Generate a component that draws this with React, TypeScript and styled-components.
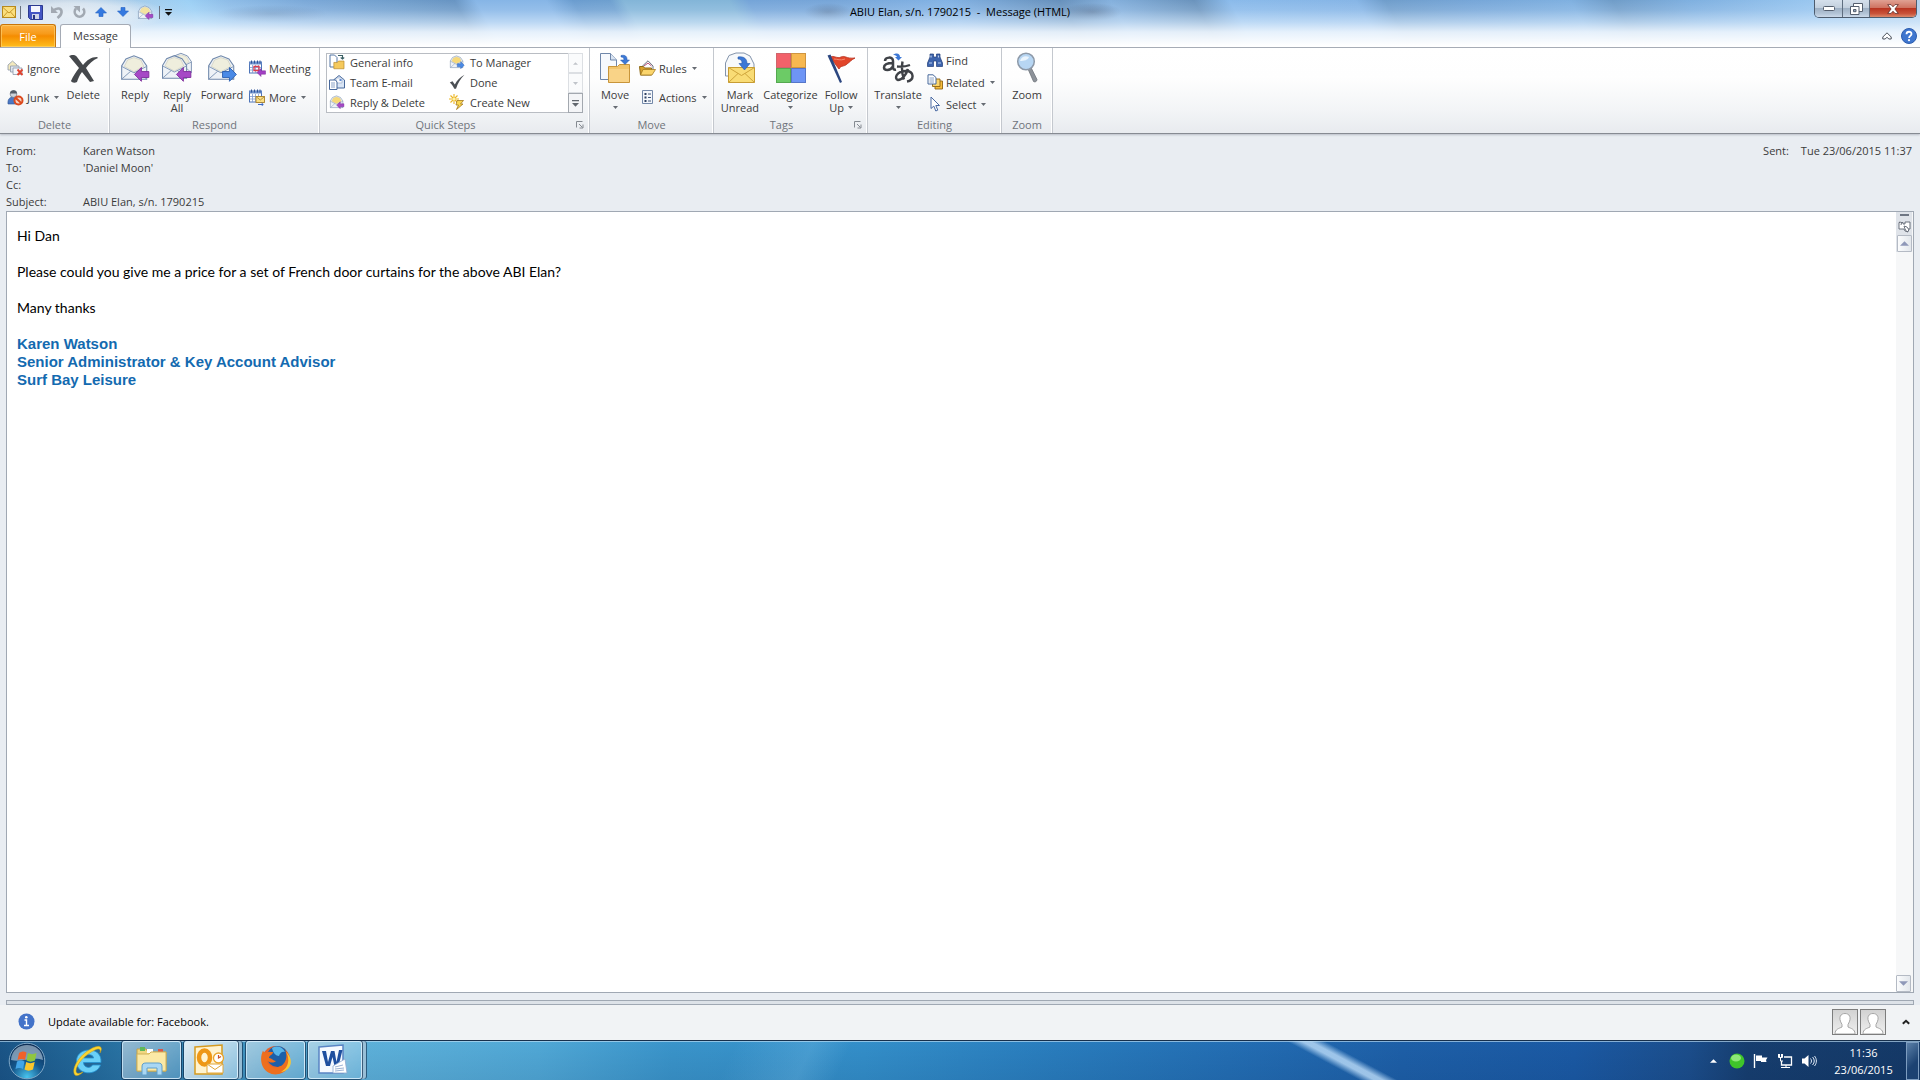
import React from "react";
import styled, { createGlobalStyle, css } from "styled-components";

const uiFont = `"Open Sans", "Noto Sans", "Segoe UI", sans-serif`;

const GlobalStyle = createGlobalStyle`
  *, *::before, *::after { box-sizing: border-box; }
  body { margin: 0; font-family: ${uiFont}; font-size: 11px; color: #3b3b3b; background: #e9edf2; }
  button { font: inherit; color: inherit; background: none; border: 0; padding: 0; margin: 0; }
  svg { display: block; flex: none; }
  p, h1, h2, dl, dd, dt { margin: 0; font-size: inherit; font-weight: inherit; }
`;

const Screen = styled.div`
  display: flex;
  flex-direction: column;
  min-height: 100vh;
`;

/* ---------- window frame ---------- */

const Glass = styled.header`
  background:
    radial-gradient(ellipse 95px 18px at 75px 14px, rgba(238,243,248,0.85), rgba(238,243,248,0.6) 60%, rgba(238,243,248,0) 100%),
    linear-gradient(180deg, rgba(215,234,253,0) 0, rgba(215,234,253,0.18) 10px, rgba(222,238,253,0.6) 22px, rgba(240,247,254,0.9) 32px, #fff 46px),
    radial-gradient(ellipse 24px 9px at 828px 12px, rgba(60,80,110,0.4), rgba(60,80,110,0) 100%),
    radial-gradient(ellipse 30px 9px at 1092px 12px, rgba(60,80,110,0.45), rgba(60,80,110,0) 100%),
    radial-gradient(ellipse 56px 9px at 272px 14px, rgba(60,90,130,0.3), rgba(60,90,130,0) 100%),
    linear-gradient(60deg, #b5c5d4 0, #b4cbe0 5%, #a5cbea 8%, #9cd0f5 11%, #8ebde8 13%, #7aa8d8 17%, #6f9dcb 22%, #6794c2 24.700%, #86b5e6 25.800%, #86b5e6 29.400%, #6a9ccf 30.800%, #6d9fcf 32.700%, #83b5d8 33.400%, #83b5d8 38.800%, #74a4d8 39.800%, #76a5d8 44%, #82b2e4 50%, #6690bb 55.800%, #84b0dd 58.400%, #6a93bc 62.700%, #8abaea 64.500%, #86b5e6 71%, #6f9dcb 72.500%, #76a6d8 77%, #7fb0e0 82%, #6f9cc8 84.200%, #7eafdf 88%, #97c5ef 94%, #b4d3ee 100%);
  border-bottom: 1px solid #a5abb5;
`;

const TitleBar = styled.div`
  display: grid;
  grid-template-columns: 1fr auto 1fr;
  height: 24px;
`;

const QuickAccess = styled.div`
  display: flex;
  align-items: center;
  padding-left: 1px;
`;

const QuickButton = styled.button<{ $w?: number }>`
  width: ${(p) => p.$w ?? 22}px;
  height: 22px;
  display: flex;
  align-items: center;
  justify-content: center;
`;

const QuickDivider = styled.span`
  width: 1px;
  height: 13px;
  margin: 0 3px;
  background: #66717f;
`;

const WindowTitle = styled.h1`
  line-height: 23px;
  color: #000;
  white-space: pre;
`;

const WindowControls = styled.div`
  justify-self: end;
  display: flex;
  height: 18px;
  margin-right: 3px;
  border: 1px solid #4d5c6e;
  border-top: 0;
  border-radius: 0 0 5px 5px;
  overflow: hidden;
`;

const ControlButton = styled.button<{ $close?: boolean }>`
  width: ${(p) => (p.$close ? 47 : 27)}px;
  display: flex;
  align-items: center;
  justify-content: center;
  border-left: 1px solid #5f6e80;
  background: ${(p) =>
    p.$close
      ? "linear-gradient(#e0a193 0, #cf7361 45%, #b93521 50%, #c9533a 80%, #dc8a6c 100%)"
      : "linear-gradient(#d5e0ec 0, #c3d0de 45%, #9fb1c5 50%, #b3c4d6 80%, #ccdaea 100%)"};
  &:first-child { border-left: 0; }
`;

const TabRow = styled.nav`
  display: flex;
  align-items: flex-end;
  height: 23px;
`;

const FileTab = styled.button`
  width: 56px;
  height: 23px;
  color: #fff;
  border: 1px solid #c8750a;
  border-bottom: 0;
  border-radius: 3px 3px 0 0;
  background: linear-gradient(#fcb040 0, #f79a1a 40%, #f58c00 50%, #ffbe1e 100%);
  box-shadow: inset 0 0 0 1px rgba(255,214,120,0.6);
`;

const MessageTab = styled.button`
  width: 71px;
  height: 24px;
  margin: 0 auto -1px 4px;
  padding-bottom: 2px;
  border: 1px solid #a5abb5;
  border-bottom: 0;
  border-radius: 3px 3px 0 0;
  background: #fff;
`;

const TabTool = styled.button`
  width: 22px;
  height: 23px;
  display: flex;
  align-items: center;
  justify-content: center;
`;

/* ---------- ribbon ---------- */

const Ribbon = styled.div`
  display: flex;
  height: 86px;
  background: linear-gradient(#fff 0, #fefefe 35%, #f2f4f6 75%, #e8ebef 100%);
  border-bottom: 1px solid #868b92;
  box-shadow: 0 1px 2px #b9bec6;
`;

const Group = styled.section<{ $w: number }>`
  display: flex;
  flex-direction: column;
  width: ${(p) => p.$w}px;
  border-right: 1px solid #c4c8ce;
  box-shadow: inset -1px 0 0 #fff;
`;

const GroupBody = styled.div`
  display: flex;
  flex: 1;
  padding: 0 4px;
`;

const GroupLabel = styled.div`
  display: flex;
  align-items: center;
  justify-content: center;
  gap: 10px;
  height: 17px;
  padding: 0 5px;
  color: #6f747b;
  h2 { flex: 1; text-align: center; line-height: 17px; }
`;

const BigButton = styled.button<{ $w: number }>`
  width: ${(p) => p.$w}px;
  display: flex;
  flex-direction: column;
  align-items: center;
  padding-top: 4px;
  line-height: 13px;
  white-space: nowrap;
  svg + span { margin-top: 4px; }
`;

const LabelLine = styled.span`
  display: flex;
  align-items: center;
  justify-content: center;
  gap: 4px;
  min-height: 13px;
`;

const Stack = styled.div<{ $rows: 2 | 3; $w: number }>`
  width: ${(p) => p.$w}px;
  display: flex;
  flex-direction: column;
  ${(p) =>
    p.$rows === 2
      ? css`padding-top: 10px; gap: 9px;`
      : css`padding-top: 2px; gap: 2px;`}
`;

const SmallButton = styled.button`
  display: flex;
  align-items: center;
  gap: 3px;
  height: 20px;
  padding-left: 3px;
  white-space: nowrap;
  svg:last-child:not(:first-child) { margin-left: 2px; }
`;

const Gallery = styled.div`
  display: flex;
  width: 257px;
  height: 60px;
  margin: 5px 0 0 2px;
  border: 1px solid #b9bdc3;
  background: #fff;
`;

const GalleryGrid = styled.div`
  flex: 1;
  display: grid;
  grid-template-columns: 120px 1fr;
  grid-template-rows: repeat(3, 20px);
  margin-top: -2px;
`;

const GalleryItem = styled(SmallButton)`
  gap: 5px;
  padding-left: 2px;
`;

const GalleryScroll = styled.div`
  display: flex;
  flex-direction: column;
  width: 15px;
  margin: -1px;
`;

const GalleryScrollButton = styled.button<{ $on?: boolean }>`
  flex: 1;
  display: flex;
  align-items: center;
  justify-content: center;
  border: 1px solid ${(p) => (p.$on ? "#a3a8af" : "#dcdfe3")};
  background: ${(p) => (p.$on ? "#f4f5f7" : "#fafbfc")};
`;

/* ---------- message ---------- */

const MessageHeader = styled.div`
  display: flex;
  justify-content: space-between;
  padding: 8px 8px 1px 6px;
  line-height: 17px;
`;

const Fields = styled.dl`
  display: grid;
  grid-template-columns: 77px auto;
  grid-auto-rows: 17px;
`;

const Sent = styled.dl`
  display: flex;
  gap: 12px;
`;

const Reader = styled.main`
  flex: 1;
  display: flex;
  margin: 0 6px;
  border: 1px solid #a0a8b3;
  background: #fff;
`;

const MessageText = styled.article`
  flex: 1;
  padding: 15px 10px;
  font: 14px/18px Lato, Carlito, Calibri, sans-serif;
  color: #000;
  p { min-height: 18px; }
`;

const Signature = styled.div`
  font: bold 15px/18px "Liberation Sans", Arial, sans-serif;
  color: #136ab0;
`;

const Scroller = styled.div`
  width: 17px;
  padding-right: 1px;
  display: flex;
  flex-direction: column;
  justify-content: space-between;
  background: #f6f7f8;
`;

const ScrollHead = styled.div`
  display: flex;
  flex-direction: column;
  align-items: center;
  background: #dfe3e9;
`;

const SplitHandle = styled.span`
  width: 9px;
  height: 2px;
  margin: 2px 0 4px;
  background: #6e7683;
`;

const ScrollButton = styled.button`
  width: 15px;
  height: 17px;
  display: flex;
  align-items: center;
  justify-content: center;
  border: 1px solid #b4bac4;
  border-radius: 1px;
  background: linear-gradient(90deg, #fbfcfd, #e3e7ec);
  svg + & { margin-top: 2px; }
`;

const Splitter = styled.div`
  height: 5px;
  margin: 7px 6px 0;
  border: 1px solid #a0a8b3;
  background: #dde2e8;
`;

const PeoplePane = styled.footer`
  display: flex;
  align-items: center;
  height: 35px;
  padding: 0 10px 2px 18px;
  background: #f1f3f5;
  color: #000;
`;

const PeopleText = styled.span`
  flex: 1;
  margin-left: 13px;
`;

const Avatar = styled.span`
  width: 26px;
  height: 26px;
  margin-right: 2px;
  border: 1px solid #7d7d7d;
  background: linear-gradient(#d2d2d2, #efefef);
`;

const PaneToggle = styled.button`
  margin-left: 14px;
`;

/* ---------- taskbar ---------- */

const Taskbar = styled.div`
  display: flex;
  align-items: stretch;
  height: 40px;
  border-top: 1px solid #17304c;
  box-shadow: inset 0 1px 0 rgba(190,222,245,0.65);
  color: #fff;
  background:
    linear-gradient(28deg, rgba(190,224,252,0) calc(50% - 9px), rgba(200,230,255,0.75) calc(50% - 2px), rgba(200,230,255,0.75) calc(50% + 2px), rgba(190,224,252,0) calc(50% + 9px)) 71.200% 0 / 120px 100% no-repeat,
    linear-gradient(115deg, transparent 38%, rgba(140,205,240,0.22) 42%, transparent 44%),
    linear-gradient(180deg, rgba(0,20,60,0.02), rgba(0,20,60,0.1)),
    linear-gradient(90deg, #1b5688 0, #256e9f 5%, #3f93c0 12%, #5fb4dd 19%, #52abd9 28%, #3b97cd 35%, #3491cc 45%, #2a7fc0 55%, #2470b6 64%, #1e61aa 73%, #1b5ba6 82%, #1c4f8d 88%, #173f70 91%, #153a68 100%);
`;

const StartButton = styled.button`
  width: 54px;
  display: flex;
  align-items: center;
  justify-content: center;
`;

const PinnedButton = styled.button`
  width: 68px;
  display: flex;
  align-items: center;
  justify-content: center;
`;

const TaskButton = styled.button<{ $active?: boolean; $stacked?: boolean }>`
  width: ${(p) => (p.$stacked ? 54 : 59)}px;
  height: 38px;
  margin-right: ${(p) => (p.$stacked ? 8 : 3)}px;
  padding-right: ${(p) => (p.$stacked ? 4 : 0)}px;
  display: flex;
  align-items: center;
  justify-content: center;
  border: 1px solid rgba(220,240,252,0.8);
  border-radius: 3px;
  background: ${(p) =>
    p.$active
      ? "linear-gradient(135deg, rgba(255,255,255,0.85), rgba(190,225,245,0.6))"
      : "linear-gradient(135deg, rgba(255,255,255,0.5), rgba(160,210,240,0.28))"};
  box-shadow: 0 0 0 1px rgba(12,40,70,0.65)${(p) =>
    p.$stacked ? ", 4px 0 0 0 rgba(190,224,244,0.75), 5px 0 0 0 rgba(12,40,70,0.6)" : ""};
`;

const Tray = styled.div`
  display: flex;
  align-items: center;
  margin-left: auto;
`;

const TrayButton = styled.button`
  width: 24px;
  height: 24px;
  display: flex;
  align-items: center;
  justify-content: center;
`;

const Clock = styled.div`
  width: 85px;
  text-align: center;
  line-height: 17px;
  padding-top: 1px;
`;

const ShowDesktop = styled.button`
  align-self: stretch;
  width: 13px;
  margin: 1px 1px 0 0;
  border: 1px solid #7d9dc0;
  background: linear-gradient(135deg, #5b80a8, #1c4272 60%);
`;

/* ---------- drawings ---------- */

const Caret = ({ c = "#666b72" }: { c?: string }) => (
  <svg width="5" height="3" viewBox="0 0 5 3"><path d="M0 0h5L2.500 3z" fill={c} /></svg>
);
const UpTri = ({ c = "#666b72", w = 5 }: { c?: string; w?: number }) => (
  <svg width={w} height={(w + 1) / 2} viewBox="0 0 6 3"><path d="M0 3h6L3 0z" fill={c} /></svg>
);
const DownTri = ({ c, w }: { c: string; w: number }) => (
  <svg width={w} height={(w + 1) / 2} viewBox="0 0 6 3"><path d="M0 0h6L3 3z" fill={c} /></svg>
);

const LeftArrow = <path d="M14.500 21 21 14.500v3.800h7v5.600h-7v3.600z" fill="#a649c6" stroke="#7b2a99" strokeWidth=".8" />;
const RightArrow = <path d="M28.500 21 22 14.500v3.800h-6.500v5.600H22v3.600z" fill="#4a8ae6" stroke="#2559ad" strokeWidth=".8" />;

const envelopeShape = (tint: string) => (
  <>
    <path d="M1.500 11 5.500 4.500 13 1.500 20.500 4.500l4.500 6.500v12.500H1.500z" fill="#eef2f7" stroke="#7088aa" />
    <path d="M4 11.500 7 5.500 13 3.300 19.500 5.500l2.800 6L13 16.500z" fill={tint} stroke="#c9c9b8" strokeWidth=".6" />
    <path d="M1.500 11.500 13 17.500l12-6M1.500 23.500 10 16M25 23.500 16 16" fill="none" stroke="#7f96b6" strokeWidth=".9" />
  </>
);

const MailIcon = ({ size = 32, dir, all, tint = "#efeedd" }: { size?: number; dir?: "l" | "r"; all?: boolean; tint?: string }) => (
  <svg width={size} height={size} viewBox="0 0 30 30">
    {all && <g transform="translate(8 0) scale(.82)">{envelopeShape(tint)}</g>}
    <g transform={all ? "translate(0 2) scale(.96)" : "translate(1 2)"}>{envelopeShape(tint)}</g>
    {dir === "l" && LeftArrow}
    {dir === "r" && RightArrow}
  </svg>
);

const ClosedMail = () => (
  <svg width="14" height="12" viewBox="0 0 14 12">
    <rect x=".5" y=".5" width="13" height="11" fill="#fbdf7c" stroke="#b78a1d" />
    <path d="M1 1.500 7 7l6-5.500M1 11l4.500-5M13 11 8.500 6" fill="none" stroke="#c99a2c" />
  </svg>
);
const SaveIcon = () => (
  <svg width="15" height="15" viewBox="0 0 15 15">
    <path d="M.5.500h14v14H2.500l-2-2z" fill="#4456c4" stroke="#2b3a8f" />
    <rect x="3" y="1" width="9" height="6" fill="#f4f6fd" />
    <rect x="4" y="9" width="7" height="5" fill="#cfd5e8" /><rect x="5" y="10" width="2" height="4" fill="#27347f" />
  </svg>
);
const UndoIcon = () => (
  <svg width="14" height="14" viewBox="0 0 14 14" fill="none" stroke="#a2a9b2" strokeWidth="2.600">
    <path d="M3 6C7 2 12 3 11.500 7.500 11.300 9.500 9.500 11.500 7.500 13" /><path d="M1 1v7h7z" fill="#a2a9b2" stroke="none" />
  </svg>
);
const RedoIcon = () => (
  <svg width="14" height="14" viewBox="0 0 14 14" fill="none" stroke="#a2a9b2" strokeWidth="2.600">
    <path d="M11 3.500A4.800 4.800 0 1 1 4 3.500" /><path d="M1.500 1H8v6.500z" fill="#a2a9b2" stroke="none" />
  </svg>
);
const BlueArrow = ({ up }: { up?: boolean }) => (
  <svg width="12" height="10" viewBox="0 0 12 10">
    <path d={up ? "M6 .5 11.500 6H8v3.500H4V6H.5z" : "M6 9.500 11.500 4H8V.5H4V4H.5z"} fill="#3579e0" stroke="#2461c2" strokeWidth=".6" />
  </svg>
);
const CustomizeIcon = ({ c = "#111" }: { c?: string }) => (
  <svg width="7" height="7" viewBox="0 0 7 7"><path d="M0 0h7v1.200H0zM0 3h7L3.500 6.800z" fill={c} /></svg>
);
const MinIcon = () => (
  <svg width="12" height="5" viewBox="0 0 12 5"><rect x=".5" y=".5" width="11" height="4" rx="1" fill="#fff" stroke="#555f6e" /></svg>
);
const RestoreIcon = () => (
  <svg width="13" height="12" viewBox="0 0 13 12" stroke="#555f6e" fill="#fff">
    <path d="M3.500.500h9v8h-9z" /><path d="M.5 3.500h8.500v8H.5z" /><path d="M3.500 6.500h2.500v2.200H3.500z" fill="#93a8bf" />
  </svg>
);
const CloseIcon = () => (
  <svg width="12" height="10" viewBox="0 0 12 10">
    <path d="M.7.600h3.300L6 2.800 8 .6h3.300L7.900 5l3.400 4.400H8L6 7.200 4 9.400H.7L4.100 5z" fill="#fff" stroke="#5d2a26" strokeWidth=".8" />
  </svg>
);
const ChevronUp = () => (
  <svg width="10" height="8" viewBox="0 0 10 8"><path d="M5 .8 9.200 5v2H6.800L5 5.200 3.200 7H.8V5z" fill="#fff" stroke="#4a515b" /></svg>
);
const HelpIcon = () => (
  <svg width="16" height="16" viewBox="0 0 16 16">
    <circle cx="8" cy="8" r="7.500" fill="#3e76cf" stroke="#2b5cae" />
    <path d="M5.500 6.200c0-3.300 5-3.200 5-.2 0 1.900-2.400 1.900-2.400 4" fill="none" stroke="#fff" strokeWidth="1.800" />
    <circle cx="8" cy="12.200" r="1.100" fill="#fff" />
  </svg>
);

const IgnoreIcon = () => (
  <svg width="17" height="16" viewBox="0 0 17 16">
    <path d="M1 5 5.500 1 10 5v5H1z" fill="#f3e9bd" stroke="#8d98a8" strokeWidth=".8" />
    <path d="M3.500 6H12v6H3.500z" fill="#dfe7f1" stroke="#8d98a8" strokeWidth=".8" />
    <path d="M6 8h9v6.500H6z" fill="#f4f7fb" stroke="#8d98a8" strokeWidth=".8" />
    <path d="m10.500 9.500 5 5.500m0-5.500-5 5.500" stroke="#e0432f" strokeWidth="1.900" />
  </svg>
);
const JunkIcon = () => (
  <svg width="17" height="17" viewBox="0 0 17 17">
    <path d="M1 15c-.5-5 2-7 5-7s4 2 4 7z" fill="#4a78c4" stroke="#2b5291" strokeWidth=".6" />
    <circle cx="6.500" cy="5" r="3.400" fill="#cdd3da" stroke="#5b6572" strokeWidth=".6" />
    <path d="M3 4.500C3 .5 10 0 10 4.500z" fill="#555d68" />
    <circle cx="11.500" cy="11.500" r="4" fill="#f8d6c8" stroke="#dc4a1e" strokeWidth="2" /><path d="m8.800 9 5.400 5" stroke="#dc4a1e" strokeWidth="2" />
  </svg>
);
const DeleteIcon = () => (
  <svg width="32" height="32" viewBox="0 0 32 32">
    <path d="M2 4c2-1 6-2 8 1l6 8c4-5 8-8 14-8l1 1c-5 2-9 6-12 10l8 13-4 1-8-10c-3 4-4 7-5 10-2 1-5 1-6-1 2-5 5-9 8-13z" fill="#45484c" />
  </svg>
);
const MeetingIcon = ({ more }: { more?: boolean }) => (
  <svg width="17" height="17" viewBox="0 0 17 17">
    <rect x=".5" y="2" width="12" height="11" fill="#fff" stroke="#4d74b8" />
    <path d="M.5 2h12v2.500H.5z" fill="#6f92cd" /><path d="M2.500.500v3m3-3v3m3-3v3m2.500-3v3" stroke="#2f539a" />
    <path d="M3.500 5v8m3-8v8m3-8v8M1 7.500h11M1 10h11" stroke="#7f9bd0" strokeWidth=".8" />
    {more ? (
      <><rect x="7" y="7.500" width="8.500" height="6" fill="#fadf86" stroke="#a8812a" strokeWidth=".9" /><path d="m7.500 8 3.800 3 3.700-3" fill="none" stroke="#a8812a" strokeWidth=".8" /><path d="M9 15.500h5m-1.500-1.500 1.800 1.500-1.800 1.500" fill="none" stroke="#3a68c4" /></>
    ) : (
      <><path d="M5 6.500h5v4H5z" fill="none" stroke="#dd3b4c" strokeWidth="1.300" /><path d="M8 12.500 12 8.500v2.300h4.500v3.400H12v2.300z" fill="#a33fc4" stroke="#7b2a99" strokeWidth=".5" /></>
    )}
  </svg>
);
const folder = <path d="M.5 3.500h5l1.500-2h8v11H.5z" fill="#f5c95c" stroke="#b9892c" />;
const GeneralIcon = () => (
  <svg width="16" height="16" viewBox="0 0 16 16">
    <path d="M1 1h4.500L8 3.500V13H1z" fill="#fff" stroke="#5576a5" /><g transform="translate(4.500 6) scale(.7)">{folder}</g>
    <path d="M9 1.500h4.500V5m-1.800-1.500L13.500 5l1.700-1.500" fill="none" stroke="#395f63" strokeWidth="1.100" />
  </svg>
);
const TeamIcon = () => (
  <svg width="16" height="16" viewBox="0 0 16 16">
    <path d="M4.500 6 10 1.500 15.500 6v8h-11z" fill="#d9e5f5" stroke="#47689b" /><path d="M7 4h6v5H7z" fill="#f8fafd" stroke="#91a6c6" strokeWidth=".6" />
    <path d="M.5 6h6l1.500 2v7.500H.5z" fill="#fff" stroke="#47689b" /><path d="M2 9h4m-4 2h4m-4 2h4" stroke="#6f8dba" strokeWidth=".8" /><path d="M10.500 5h2v2h-2z" fill="#5d8ad6" />
  </svg>
);
const DoneIcon = () => (
  <svg width="16" height="16" viewBox="0 0 16 16"><path d="m.8 8.500 2.700-1.200 2.300 3.200C8 6.500 11 3 15.500.8c-4 4-6.500 8-8.500 14H5.300C4.200 12.500 2.500 10 .8 8.500z" fill="#4b4f54" /></svg>
);
const CreateIcon = () => (
  <svg width="16" height="16" viewBox="0 0 16 16">
    <path d="M5 0v10M0 5h10M1.500 1.500l7 7m0-7-7 7" stroke="#ebb522" strokeWidth="1.100" /><circle cx="5" cy="5" r="1.600" fill="#fff2a6" />
    <path d="M8 6.500h6.500L11.500 10H14l-6.500 5.500 2-4.500H7z" fill="#fbd850" stroke="#a5781c" strokeWidth=".8" />
  </svg>
);
const MoveIcon = () => (
  <svg width="32" height="32" viewBox="0 0 32 32">
    <path d="M1.500 1.500h10L17.500 8v19.500h-16z" fill="#f6f9fd" stroke="#6f87aa" /><path d="M11.500 1.500V8h6" fill="#d9e4f2" stroke="#6f87aa" />
    <path d="M9.500 14.500h9l2-2h10v18h-21z" fill="#f2c56c" stroke="#c8953a" /><path d="M10 17h20v13H10z" fill="#f9d387" />
    <path d="M22 3.500c4-1 6.500 1 6 4.500h2.500L26 12.500 21.500 8H25c0-2-1-3-3-3z" fill="#3c78d6" stroke="#2559ad" strokeWidth=".5" />
  </svg>
);
const RulesIcon = () => (
  <svg width="17" height="16" viewBox="0 0 17 16">
    <path d="M2.500 7 9 .8 14 6v6H2.500z" fill="#fff" stroke="#6c7480" /><path d="m5 6 4-3 3.500 3" fill="none" stroke="#b24b73" />
    <path d="M.5 6.500h4l1 1.500h7v7H1.500z" fill="#d9a02c" stroke="#8f6a17" /><path d="M4 9.500h12.500L13 15H1.500z" fill="#fbd56c" stroke="#a57b20" strokeWidth=".8" />
  </svg>
);
const ActionsIcon = () => (
  <svg width="17" height="16" viewBox="0 0 17 16">
    <path d="M3.500 1.500h10v13h-10z" fill="#f4f7fb" stroke="#7388a8" /><path d="M5.500 4h2v2h-2zM5.500 7.500h2v2h-2zM5.500 11h2v2h-2z" fill="#2f4263" /><path d="M9 5h3M9 8.500h3M9 12h3" stroke="#3e5479" />
  </svg>
);
const UnreadIcon = () => (
  <svg width="32" height="32" viewBox="0 0 32 32">
    <path d="M1.500 11 5 3.500 12 1l8 0 6 3 4 8v12H1.500z" fill="#f7f9fb" stroke="#8494ab" />
    <path d="M4.500 15.500h26v15h-26z" fill="#f9dc75" stroke="#c79c33" /><path d="m4.500 15.500 13 8 13-8M4.500 30.500 14 21.500m16.500 9L21 21.500" fill="none" stroke="#cfa53b" />
    <path d="M14 5c6-1 9 2 9 6.500h3L20.500 18 15 11.500h3C18 8.500 17 7 14 7z" fill="#3c78d6" stroke="#2559ad" strokeWidth=".6" />
  </svg>
);
const CategorizeIcon = () => (
  <svg width="32" height="32" viewBox="0 0 32 32">
    <rect x="1.500" y="1.500" width="14" height="14" fill="#f2616a" stroke="#d0656b" /><rect x="16.500" y="1.500" width="14" height="14" fill="#f7b850" stroke="#cf9540" />
    <rect x="1.500" y="16.500" width="14" height="14" fill="#6ccb66" stroke="#55a850" /><rect x="16.500" y="16.500" width="14" height="14" fill="#6e95f5" stroke="#5676c9" />
  </svg>
);
const FlagIcon = () => (
  <svg width="32" height="32" viewBox="0 0 32 32">
    <path d="M5 5c4-2 7 2 11 0s5 2 14 1c-4 2-5 4-8 6-3 3-6 1-8 5z" fill="#e2452a" stroke="#b72f1a" strokeWidth=".8" /><path d="M9 7c4 0 6 2 11 0" stroke="#f58a70" fill="none" />
    <path d="m2.500 3.500 3-1L17 30l-2 1z" fill="#2c4780" />
  </svg>
);
const TranslateIcon = () => (
  <svg width="32" height="32" viewBox="0 0 32 32">
    <g fill="none" stroke="#3f4247">
      <path d="M3 9c0-4 8-5 8 0v6c0 2 1 3 3 2.500M11 11c-5 0-9 1.500-9 4.500s6 4 9-1" strokeWidth="2.500" />
      <path d="M15 14.500c5 .5 9 0 13-1.500M20.500 9.500c-1 7-1 12 1.500 18M26 17c-2 6-6 11-10 11-4-1-2-9 8-9 8 0 9 9 1 10.500" strokeWidth="2.400" />
    </g>
    <path d="M11 3c4-3 7-1 7 2h2l-3.500 3.500L13 5h2c-.5-1.500-2-2-4-2z" fill="#3c78d6" />
  </svg>
);
const FindIcon = () => (
  <svg width="16" height="16" viewBox="0 0 16 16">
    <path d="M3 2h3.500v3H9.500V2H13v3l2.500 6v3.500h-6V9h-3v5.500h-6V11L3 5z" fill="#3d64ad" stroke="#1f3c78" strokeWidth=".7" /><path d="M2 11h3m6 0h3M4 3.500v2m7.500-2v2" stroke="#bcd0f1" strokeWidth="1.200" />
  </svg>
);
const RelatedIcon = () => (
  <svg width="16" height="16" viewBox="0 0 16 16">
    <path d="M8 7h7.500v8H8z" fill="#f6bd3c" stroke="#8e6413" strokeWidth=".9" /><path d="M5.500 5h7.500v7.500H5.500z" fill="#fbd56c" stroke="#8e6413" strokeWidth=".9" />
    <path d="M1 .8h5L9 3.500V10H1z" fill="#fff" stroke="#47689b" /><path d="M2.500 4H7M2.500 6H7M2.500 8H7" stroke="#6f8dba" strokeWidth=".8" />
  </svg>
);
const SelectIcon = () => (
  <svg width="16" height="16" viewBox="0 0 16 16"><path d="M4 1v11.500l2.800-2.400L8.800 15l2-.9-2-4.600h3.700z" fill="#fff" stroke="#4a6aa3" /></svg>
);
const ZoomIcon = () => (
  <svg width="32" height="32" viewBox="0 0 32 32">
    <path d="m17 17 3-1.500 6 12c0 2-2 3-3.500 2z" fill="#8d9299" stroke="#666b72" strokeWidth=".7" />
    <circle cx="15" cy="9.500" r="8.300" fill="#b7d6f3" stroke="#8d99a8" strokeWidth="1.500" /><path d="M9 9c1-4 5-6 9-4-1 3-5 4-9 4z" fill="#eaf4fd" />
  </svg>
);
const LauncherIcon = () => (
  <svg width="8" height="8" viewBox="0 0 8 8" fill="none" stroke="#858a91"><path d="M.5 6.500v-6h6M3 3l3.500 3.500M7 3.500V7H3.500" /></svg>
);
const NavIcon = () => (
  <svg width="13" height="13" viewBox="0 0 13 13" fill="#fff" stroke="#5d6470" strokeWidth=".9">
    <path d="M1 2.500h4v1.500h2V2h5v7h-2v3l-3-1-1-2H1z" /><path d="M2 1.500 3.500 3 3 5M6 6l3 1 2 3-2 2-2-3z" />
  </svg>
);
const InfoIcon = () => (
  <svg width="17" height="17" viewBox="0 0 17 17">
    <circle cx="8.500" cy="8.500" r="8" fill="#4373c9" /><path d="M6.500 7h2v5M6 12.500h5" stroke="#fff" strokeWidth="1.400" fill="none" /><circle cx="8.300" cy="4.300" r="1.300" fill="#fff" />
  </svg>
);
const PersonIcon = () => (
  <svg width="24" height="24" viewBox="0 0 24 24"><path d="M2 24c0-5 4-5.500 7-7v-2.500C4.500 7 8 3.500 12 3.500S19.500 7 15 14.500V17c3 1.500 7 2 7 7z" fill="#fff" stroke="#a6a6a6" /></svg>
);
const PaneChevron = () => (
  <svg width="8" height="6" viewBox="0 0 8 6"><path d="m.8 4.800 3.200-3 3.200 3" fill="none" stroke="#222" strokeWidth="2" /></svg>
);

const StartIcon = () => (
  <svg width="38" height="38" viewBox="0 0 38 38">
    <defs>
      <radialGradient id="orb" cx=".5" cy=".95" r=".9"><stop offset="0" stopColor="#48c4ee" /><stop offset=".5" stopColor="#14568c" /><stop offset="1" stopColor="#0d2f57" /></radialGradient>
    </defs>
    <circle cx="19" cy="19" r="17.800" fill="url(#orb)" stroke="#7fa7c6" />
    <path d="M3 18C4 -2 34 -2 35 18 25 14 13 21 3 18z" fill="#cfe0ec" opacity=".55" />
    <path d="M11 11c3-2 5-2 7.500-.5L17 18c-2.500-1.500-5-1.500-7.500 0z" fill="#f0622a" /><path d="M20 11c2.500 1.500 5.500 1.500 8.500 0L27 18.500c-3 1.500-6 1.500-8.500 0z" fill="#8fc63f" />
    <path d="M9 19.500c2.500-1.500 5-1.500 7.500 0L15 27c-2.500-1.500-5-1.500-7.500 0z" fill="#42a5e8" /><path d="M18.200 20c2.500 1.500 5.500 1.500 8.500 0L25 27.500c-3 1.500-6 1.500-8.500 0z" fill="#fbc62c" />
  </svg>
);
const IeIcon = () => (
  <svg width="34" height="34" viewBox="0 0 34 34">
    <path d="M30 18.500H12.500c.3 5.500 7 6.500 9 2.500h8c-3.500 11-24 11-24-4 0-14.500 26-15.500 24.500 1.500zM12.700 14h10c-.5-4.500-9-4.500-10 0z" fill="#6ad0f7" stroke="#2492d0" strokeWidth=".8" />
    <path d="M4 31C-1 25 10 8 24 3c6-2 8 1 5 6 1-4-1-5-5-3C13 11 5 21 5 27c0 3 3 3 7 1-3 3-6 4.500-8 3z" fill="#fbd530" stroke="#c99b16" strokeWidth=".5" />
  </svg>
);
const ExplorerIcon = () => (
  <svg width="34" height="32" viewBox="0 0 34 32">
    <path d="M2 5h9l2 3h18v19H2z" fill="#f0d781" stroke="#c2a146" /><path d="M5 3h5v4H5z" fill="#5eb85a" /><path d="M12 5h6v4h-6z" fill="#fff" /><path d="M23 5h5v4h-5z" fill="#d8574a" /><path d="M2 10h12l2-2h15v19H2z" fill="#fbe9a6" stroke="#d0b158" />
    <path d="M7 31v-8c0-3 1-4 4-4h12c3 0 4 1 4 4v8h-5v-7H12v7z" fill="#a9d7f3" stroke="#5f9fcb" />
  </svg>
);
const OutlookIcon = () => (
  <svg width="32" height="32" viewBox="0 0 32 32">
    <path d="M2 3 29 1v29H2z" fill="#fff3cf" stroke="#d59a20" strokeWidth="1.500" /><ellipse cx="11.500" cy="13.500" rx="5.500" ry="7" fill="none" stroke="#ee9716" strokeWidth="4.500" />
    <path d="M14 20h16v9H14z" fill="#fff" stroke="#e0a63a" /><path d="m14 20 8 5.500 8-5.500" fill="none" stroke="#e0a63a" /><circle cx="25.500" cy="14" r="5" fill="#fff" stroke="#e9a42b" strokeWidth="1.300" /><path d="M25.500 11v3l2.500-1.500" fill="none" stroke="#c9542c" strokeWidth="1.200" />
  </svg>
);
const FirefoxIcon = () => (
  <svg width="32" height="32" viewBox="0 0 32 32">
    <circle cx="16" cy="16" r="14" fill="#e8622a" /><circle cx="17.500" cy="12.500" r="10.500" fill="#1d5fa8" /><path d="M12 4c5-3 11-1 13 4-3-1-5 1-6 4-3 0-6-3-7-8z" fill="#58b5e8" />
    <path d="M3 7c1 1 2 1.500 4 1.500C9 7 11 8 13 8c0 3-4 3-4 6 3 0 4 3 7 3-3 3-7 1-9 0 2 9 16 9 19-2 1-4 0-7-1-9 5 4 7 13 2 19-7 8-19 7-24-2-3-6-2-12 0-16.500z" fill="#ee6f1e" /><path d="M26 8c4 6 3 16-5 20 11-2 13-13 5-20z" fill="#fcc631" />
  </svg>
);
const WordIcon = () => (
  <svg width="32" height="32" viewBox="0 0 32 32">
    <path d="M2 3 26 1v28H2z" fill="#f5f9ff" stroke="#5a84c4" strokeWidth="1.500" /><path d="M5 7h4l2 11 3-11h3.500l2 11L22 6h3.500l-4 16h-4L15.500 13 13 22H9z" fill="#1f4f9f" />
    <path d="m16 22 12-7 2 14H16z" fill="#fff" stroke="#8ea8cf" strokeWidth=".8" /><path d="m18 23 8-2m-8 4 9-1m-9 3 9-1" stroke="#9eb3d4" />
  </svg>
);
const OnlineIcon = () => (
  <svg width="16" height="16" viewBox="0 0 16 16"><circle cx="8" cy="8" r="7.500" fill="#3fc52a" /><ellipse cx="7" cy="5" rx="5" ry="3.500" fill="#a3f18c" opacity=".8" /></svg>
);
const TrayFlag = () => (
  <svg width="16" height="16" viewBox="0 0 16 16"><path d="M1.500 1v14" stroke="#fff" strokeWidth="1.400" /><path d="M3 2.500h6v2h5.500L13 7l.5 2H8V8H3z" fill="#fff" /></svg>
);
const TrayNetwork = () => (
  <svg width="16" height="16" viewBox="0 0 16 16" fill="none" stroke="#fff"><path d="M7 4h7.500v8H4.500V8" strokeWidth="1.300" /><path d="M4 14.500h9M9 12v2.500M1.500 1v3.500h4V1M3.500 4.500V8H6M2.500 1v3m2-3v3" /></svg>
);
const TraySound = () => (
  <svg width="16" height="16" viewBox="0 0 16 16"><path d="M1 5.500h2.500L7.500 2v12l-4-3.500H1z" fill="#fff" /><path d="M9.500 5.500c1.300 1.500 1.300 3.500 0 5M11.500 4c2.300 2.500 2.300 5.500 0 8M13.500 3c2.500 3 2.500 7 0 10" fill="none" stroke="#dfe9f5" /></svg>
);

/* ---------- composed parts ---------- */

function Big({ icon, lines, w, caret }: { icon: React.ReactNode; lines: string[]; w: number; caret?: "inline" | "below" }) {
  return (
    <BigButton $w={w}>
      {icon}
      {lines.map((l, i) => (
        <LabelLine key={l}>
          {l}
          {caret === "inline" && i === lines.length - 1 && <Caret />}
        </LabelLine>
      ))}
      {caret === "below" && <LabelLine><Caret /></LabelLine>}
    </BigButton>
  );
}

function Small({ icon, label, caret }: { icon: React.ReactNode; label: string; caret?: boolean }) {
  return <SmallButton>{icon}{label}{caret && <Caret />}</SmallButton>;
}

function RibbonGroup({ label, w, launcher, children }: { label: string; w: number; launcher?: boolean; children: React.ReactNode }) {
  return (
    <Group $w={w}>
      <GroupBody>{children}</GroupBody>
      <GroupLabel>
        <h2>{label}</h2>
        {launcher && <button aria-label={`${label} options`}><LauncherIcon /></button>}
      </GroupLabel>
    </Group>
  );
}

const quickSteps: [string, React.ReactNode][] = [
  ["General info", <GeneralIcon />],
  ["To Manager", <MailIcon size={16} dir="r" tint="#f7d978" />],
  ["Team E-mail", <TeamIcon />],
  ["Done", <DoneIcon />],
  ["Reply & Delete", <MailIcon size={16} dir="l" tint="#f7d978" />],
  ["Create New", <CreateIcon />],
];

export default function App() {
  return (
    <Screen>
      <GlobalStyle />
      <Glass>
        <TitleBar>
          <QuickAccess>
            <QuickButton $w={16} aria-label="Window menu"><ClosedMail /></QuickButton>
            <QuickDivider />
            <QuickButton aria-label="Save"><SaveIcon /></QuickButton>
            <QuickButton aria-label="Undo"><UndoIcon /></QuickButton>
            <QuickButton aria-label="Redo"><RedoIcon /></QuickButton>
            <QuickButton aria-label="Previous item"><BlueArrow up /></QuickButton>
            <QuickButton aria-label="Next item"><BlueArrow /></QuickButton>
            <QuickButton aria-label="Reply"><MailIcon size={17} dir="l" tint="#f3e2a0" /></QuickButton>
            <QuickDivider />
            <QuickButton $w={10} aria-label="Customize toolbar"><CustomizeIcon /></QuickButton>
          </QuickAccess>
          <WindowTitle>{"ABIU Elan, s/n. 1790215  -  Message (HTML)"}</WindowTitle>
          <WindowControls>
            <ControlButton aria-label="Minimize"><MinIcon /></ControlButton>
            <ControlButton aria-label="Restore"><RestoreIcon /></ControlButton>
            <ControlButton $close aria-label="Close"><CloseIcon /></ControlButton>
          </WindowControls>
        </TitleBar>
        <TabRow>
          <FileTab>File</FileTab>
          <MessageTab>Message</MessageTab>
          <TabTool aria-label="Minimize the ribbon"><ChevronUp /></TabTool>
          <TabTool aria-label="Help"><HelpIcon /></TabTool>
        </TabRow>
      </Glass>

      <Ribbon>
        <RibbonGroup label="Delete" w={110}>
          <Stack $rows={2} $w={58}>
            <Small icon={<IgnoreIcon />} label="Ignore" />
            <Small icon={<JunkIcon />} label="Junk" caret />
          </Stack>
          <Big icon={<DeleteIcon />} lines={["Delete"]} w={44} />
        </RibbonGroup>
        <RibbonGroup label="Respond" w={210}>
          <Big icon={<MailIcon dir="l" />} lines={["Reply"]} w={42} />
          <Big icon={<MailIcon dir="l" all />} lines={["Reply", "All"]} w={42} />
          <Big icon={<MailIcon dir="r" />} lines={["Forward"]} w={48} />
          <Stack $rows={2} $w={68}>
            <Small icon={<MeetingIcon />} label="Meeting" />
            <Small icon={<MeetingIcon more />} label="More" caret />
          </Stack>
        </RibbonGroup>
        <RibbonGroup label="Quick Steps" w={270} launcher>
          <Gallery>
            <GalleryGrid>
              {quickSteps.map(([label, icon]) => (
                <GalleryItem key={label}>{icon}<span>{label}</span></GalleryItem>
              ))}
            </GalleryGrid>
            <GalleryScroll>
              <GalleryScrollButton aria-label="Previous row"><UpTri c="#c0c4ca" /></GalleryScrollButton>
              <GalleryScrollButton aria-label="Next row"><Caret c="#c0c4ca" /></GalleryScrollButton>
              <GalleryScrollButton $on aria-label="More quick steps"><CustomizeIcon c="#62676e" /></GalleryScrollButton>
            </GalleryScroll>
          </Gallery>
        </RibbonGroup>
        <RibbonGroup label="Move" w={124}>
          <Big icon={<MoveIcon />} lines={["Move"]} w={42} caret="below" />
          <Stack $rows={2} $w={72}>
            <Small icon={<RulesIcon />} label="Rules" caret />
            <Small icon={<ActionsIcon />} label="Actions" caret />
          </Stack>
        </RibbonGroup>
        <RibbonGroup label="Tags" w={154} launcher>
          <Big icon={<UnreadIcon />} lines={["Mark", "Unread"]} w={44} />
          <Big icon={<CategorizeIcon />} lines={["Categorize"]} w={58} caret="below" />
          <Big icon={<FlagIcon />} lines={["Follow", "Up"]} w={44} caret="inline" />
        </RibbonGroup>
        <RibbonGroup label="Editing" w={134}>
          <Big icon={<TranslateIcon />} lines={["Translate"]} w={52} caret="below" />
          <Stack $rows={3} $w={72}>
            <Small icon={<FindIcon />} label="Find" />
            <Small icon={<RelatedIcon />} label="Related" caret />
            <Small icon={<SelectIcon />} label="Select" caret />
          </Stack>
        </RibbonGroup>
        <RibbonGroup label="Zoom" w={51}>
          <Big icon={<ZoomIcon />} lines={["Zoom"]} w={42} />
        </RibbonGroup>
      </Ribbon>

      <MessageHeader>
        <Fields>
          <dt>From:</dt><dd>Karen Watson</dd>
          <dt>To:</dt><dd>'Daniel Moon'</dd>
          <dt>Cc:</dt><dd />
          <dt>Subject:</dt><dd>ABIU Elan, s/n. 1790215</dd>
        </Fields>
        <Sent><dt>Sent:</dt><dd>Tue 23/06/2015 11:37</dd></Sent>
      </MessageHeader>

      <Reader>
        <MessageText>
          <p>Hi Dan</p>
          <p />
          <p>Please could you give me a price for a set of French door curtains for the above ABI Elan?</p>
          <p />
          <p>Many thanks</p>
          <p />
          <Signature>
            <p>Karen Watson</p>
            <p>Senior Administrator &amp; Key Account Advisor</p>
            <p>Surf Bay Leisure</p>
          </Signature>
        </MessageText>
        <Scroller>
          <ScrollHead>
            <SplitHandle />
            <NavIcon />
            <ScrollButton aria-label="Scroll up"><UpTri c="#8f98b8" w={9} /></ScrollButton>
          </ScrollHead>
          <ScrollButton aria-label="Scroll down"><DownTri c="#8f98b8" w={9} /></ScrollButton>
        </Scroller>
      </Reader>

      <Splitter />
      <PeoplePane>
        <InfoIcon />
        <PeopleText>Update available for: Facebook.</PeopleText>
        <Avatar><PersonIcon /></Avatar>
        <Avatar><PersonIcon /></Avatar>
        <PaneToggle aria-label="Expand people pane"><PaneChevron /></PaneToggle>
      </PeoplePane>

      <Taskbar>
        <StartButton aria-label="Start"><StartIcon /></StartButton>
        <PinnedButton aria-label="Internet Explorer"><IeIcon /></PinnedButton>
        <TaskButton aria-label="Windows Explorer"><ExplorerIcon /></TaskButton>
        <TaskButton $active $stacked aria-label="Outlook"><OutlookIcon /></TaskButton>
        <TaskButton aria-label="Firefox"><FirefoxIcon /></TaskButton>
        <TaskButton $stacked aria-label="Word"><WordIcon /></TaskButton>
        <Tray>
          <TrayButton aria-label="Show hidden icons"><UpTri c="#fff" w={7} /></TrayButton>
          <TrayButton aria-label="Online"><OnlineIcon /></TrayButton>
          <TrayButton aria-label="Action Center"><TrayFlag /></TrayButton>
          <TrayButton aria-label="Network"><TrayNetwork /></TrayButton>
          <TrayButton aria-label="Volume"><TraySound /></TrayButton>
          <Clock>11:36<br />23/06/2015</Clock>
          <ShowDesktop aria-label="Show desktop" />
        </Tray>
      </Taskbar>
    </Screen>
  );
}
